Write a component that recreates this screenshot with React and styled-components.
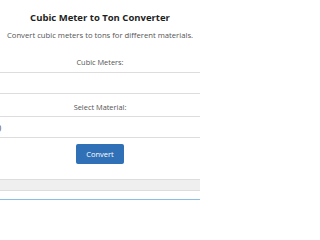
import React, { useState } from "react";
import styled, { createGlobalStyle } from "styled-components";

const GlobalStyle = createGlobalStyle`
  html, body {
    margin: 0;
    padding: 0;
    background: #fff;
    font-family: "Open Sans", "Liberation Sans", sans-serif;
    color: #333;
  }
`;

const Viewport = styled.div`
  width: 200px;
  height: 200px;
  overflow: hidden;
`;

const Card = styled.div`
  margin: 0 -54px;
  padding-top: 11px;
  text-align: center;
`;

const Title = styled.h2`
  margin: 0;
  font-size: 9.5px;
  font-weight: 700;
  line-height: 14px;
  color: #1e1e1e;
`;

const Subtitle = styled.p`
  margin: 4px 0 0;
  font-size: 7.7px;
  line-height: 12px;
  color: #555;
`;

const Label = styled.label`
  display: block;
  margin-top: ${props => props.gap}px;
  font-size: 7.4px;
  line-height: 12px;
  color: #555;
`;

const Field = styled.input`
  display: block;
  box-sizing: border-box;
  width: 100%;
  height: 22px;
  margin-top: 4px;
  border: 1px solid #ddd;
  border-radius: 3px;
  background: #fff;
`;

const Select = styled.select`
  display: block;
  box-sizing: border-box;
  width: 100%;
  height: 22px;
  margin-top: 3px;
  padding: 0 3px;
  border: 1px solid #ddd;
  border-radius: 3px;
  background: #fff;
  font-family: inherit;
  font-size: 7.5px;
  color: #333;
  appearance: none;
`;

const Button = styled.button`
  display: block;
  margin: 6px auto 0;
  width: 48px;
  height: 20px;
  padding: 0;
  border: none;
  border-radius: 2px;
  background: #2f70b6;
  color: #fff;
  font-family: inherit;
  font-size: 7.5px;
`;

const Result = styled.div`
  margin-top: 15px;
  height: 10px;
  border: 1px solid #ddd;
  background: #efefef;
`;

const Info = styled.div`
  margin-top: 8px;
  height: 10px;
  border-top: 2px solid #88bfe2;
`;

export default function App() {
  const [volume, setVolume] = useState("");
  const [material, setMaterial] = useState("sand");

  return (
    <Viewport>
      <GlobalStyle />
      <Card>
        <Title>Cubic Meter to Ton Converter</Title>
        <Subtitle>Convert cubic meters to tons for different materials.</Subtitle>
        <Label gap={15}>Cubic Meters:</Label>
        <Field value={volume} onChange={e => setVolume(e.target.value)} />
        <Label gap={7}>Select Material:</Label>
        <Select value={material} onChange={e => setMaterial(e.target.value)}>
          <option value="sand">Sand (1.6 t/m³)</option>
          <option value="gravel">Gravel (1.8 t/m³)</option>
          <option value="concrete">Concrete (2.4 t/m³)</option>
        </Select>
        <Button>Convert</Button>
        <Result />
        <Info />
      </Card>
    </Viewport>
  );
}
